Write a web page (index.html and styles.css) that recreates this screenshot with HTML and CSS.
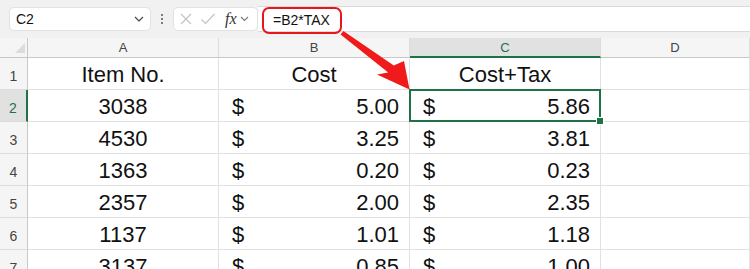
FILE: index.html
```html
<!DOCTYPE html>
<html lang="en">
<head>
    <meta charset="UTF-8">
    <title>Cost+Tax</title>
    <link rel="stylesheet" href="styles.css">
</head>
<body>
<div class="sheet">
    <div class="toolbar">
        <div class="name-box">
            <span>C2</span>
            <svg class="chev" width="10" height="6" viewBox="0 0 10 6"><path d="M1 1l4 4 4-4" fill="none" stroke="#444" stroke-width="1.2"/></svg>
        </div>
        <div class="grip"><i></i><i></i><i></i></div>
        <div class="fx-box">
            <svg width="14" height="14" viewBox="0 0 14 14"><path d="M2 2l10 10M12 2L2 12" stroke="#c4c4c4" stroke-width="1.2"/></svg>
            <svg width="16" height="14" viewBox="0 0 16 14"><path d="M1.5 7.5l4 4L14.5 2" fill="none" stroke="#c4c4c4" stroke-width="1.2"/></svg>
            <span class="fx">fx</span>
            <svg class="chev-sm" width="9" height="6" viewBox="0 0 9 6"><path d="M1 1l3.5 3.5L8 1" fill="none" stroke="#777" stroke-width="1.1"/></svg>
        </div>
        <div class="formula">
            <span class="callout">=B2*TAX</span>
        </div>
    </div>

    <div class="grid">
        <div class="corner"><span class="tri"></span></div>
        <div class="col-head">A</div>
        <div class="col-head">B</div>
        <div class="col-head active">C</div>
        <div class="col-head">D</div>

        <div class="row-head">1</div>
        <div class="cell center">Item No.</div>
        <div class="cell center">Cost</div>
        <div class="cell center">Cost+Tax</div>
        <div class="cell"></div>

        <div class="row-head active">2</div>
        <div class="cell center">3038</div>
        <div class="cell money"><span>$</span><span>5.00</span></div>
        <div class="cell money selected"><span>$</span><span>5.86</span></div>
        <div class="cell"></div>

        <div class="row-head">3</div>
        <div class="cell center">4530</div>
        <div class="cell money"><span>$</span><span>3.25</span></div>
        <div class="cell money"><span>$</span><span>3.81</span></div>
        <div class="cell"></div>

        <div class="row-head">4</div>
        <div class="cell center">1363</div>
        <div class="cell money"><span>$</span><span>0.20</span></div>
        <div class="cell money"><span>$</span><span>0.23</span></div>
        <div class="cell"></div>

        <div class="row-head">5</div>
        <div class="cell center">2357</div>
        <div class="cell money"><span>$</span><span>2.00</span></div>
        <div class="cell money"><span>$</span><span>2.35</span></div>
        <div class="cell"></div>

        <div class="row-head">6</div>
        <div class="cell center">1137</div>
        <div class="cell money"><span>$</span><span>1.01</span></div>
        <div class="cell money"><span>$</span><span>1.18</span></div>
        <div class="cell"></div>

        <div class="row-head">7</div>
        <div class="cell center">3137</div>
        <div class="cell money"><span>$</span><span>0.85</span></div>
        <div class="cell money"><span>$</span><span>1.00</span></div>
        <div class="cell"></div>
    </div>

    <!-- annotation arrow from the formula to C2 -->
    <svg class="arrow" width="750" height="269" viewBox="0 0 750 269">
        <polygon points="343.4,31 393.8,65.4 404,61 409.5,89.5 377,74.5 388.2,72.6 340.6,34.6" fill="#f01a1a"/>
    </svg>
</div>
</body>
</html>
```

FILE: styles.css
```css
body {
    margin: 0;
    background: #fff;
    font-family: "Liberation Sans", Arial, sans-serif;
    color: #111;
}
.sheet {
    position: relative;
    width: 750px;
    height: 269px;
    overflow: hidden;
}

/* formula bar */
.toolbar {
    height: 38px;
    box-sizing: border-box;
    background: #f1f1f1;
    display: flex;
    align-items: flex-start;
    padding-top: 7px;
    padding-left: 9px;
}
.name-box {
    width: 142px;
    height: 24px;
    box-sizing: border-box;
    background: #fff;
    border: 1px solid #e2e2e2;
    border-radius: 5px;
    display: flex;
    align-items: center;
    justify-content: space-between;
    padding: 0 6px 0 6px;
    font-size: 14px;
}
.grip {
    width: 22px;
    height: 24px;
    display: flex;
    flex-direction: column;
    align-items: center;
    justify-content: center;
    gap: 2px;
}
.grip i {
    width: 2px;
    height: 2px;
    background: #555;
    border-radius: 1px;
}
.fx-box {
    width: 85px;
    height: 24px;
    box-sizing: border-box;
    background: #fff;
    border: 1px solid #e2e2e2;
    border-radius: 5px;
    display: flex;
    align-items: center;
    padding-left: 5px;
    gap: 7px;
}
.fx {
    font-family: "Liberation Serif", serif;
    font-style: italic;
    font-size: 16px;
    color: #333;
    margin-left: 2px;
    margin-right: -4px;
}
.formula {
    flex: 1;
    height: 26px;
    margin-top: -1px;
    box-sizing: border-box;
    background: #fff;
    border-top: 1px solid #dadada;
    border-bottom: 1px solid #dadada;
    padding-left: 4px;
}
.callout {
    display: inline-block;
    box-sizing: border-box;
    height: 27px;
    width: 80px;
    border: 2px solid #e8161c;
    border-radius: 7px;
    font-size: 14px;
    line-height: 22px;
    padding-left: 9px;
    color: #111;
}

/* sheet grid */
.grid {
    display: grid;
    grid-template-columns: 28px 191px 191px 191px 1fr;
    grid-template-rows: 20px repeat(7, 32px);
}
.grid > div {
    box-sizing: border-box;
}
.corner {
    background: #f5f5f5;
    border-right: 1px solid #c8c8c8;
    border-bottom: 1px solid #c8c8c8;
    position: relative;
}
.tri {
    position: absolute;
    right: 2px;
    bottom: 4px;
    width: 0;
    height: 0;
    border-left: 10px solid transparent;
    border-bottom: 10px solid #dcdcdc;
}
.col-head {
    background: #f5f5f5;
    border-right: 1px solid #dcdcdc;
    border-bottom: 1px solid #c8c8c8;
    text-align: center;
    font-size: 13px;
    line-height: 20px;
    color: #444;
}
.col-head.active {
    background: #e1e1e1;
    color: #1f7246;
    border-bottom: 2px solid #1f7246;
}
.row-head {
    background: #f5f5f5;
    border-right: 1px solid #c8c8c8;
    border-bottom: 1px solid #dcdcdc;
    text-align: center;
    font-size: 14px;
    line-height: 30px;
    padding-top: 3px;
    color: #444;
}
.row-head.active {
    background: #e1e1e1;
    color: #1f7246;
    border-right: 2px solid #1f7246;
}
.cell {
    border-right: 1px solid #e1e1e1;
    border-bottom: 1px solid #e1e1e1;
    font-size: 22px;
    line-height: 30px;
    padding-top: 2px;
    white-space: nowrap;
}
.center {
    text-align: center;
}
.money {
    display: flex;
    justify-content: space-between;
    padding-left: 13px;
    padding-right: 10px;
}
.selected {
    position: relative;
}
.selected::before {
    content: "";
    position: absolute;
    left: -1px;
    top: -1px;
    right: -1px;
    bottom: -1px;
    border: 2px solid #1f7246;
}
.selected::after {
    content: "";
    position: absolute;
    right: -4px;
    bottom: -4px;
    width: 6px;
    height: 6px;
    background: #1f7246;
    border: 1px solid #fff;
}

.arrow {
    position: absolute;
    left: 0;
    top: 0;
    pointer-events: none;
}
```
